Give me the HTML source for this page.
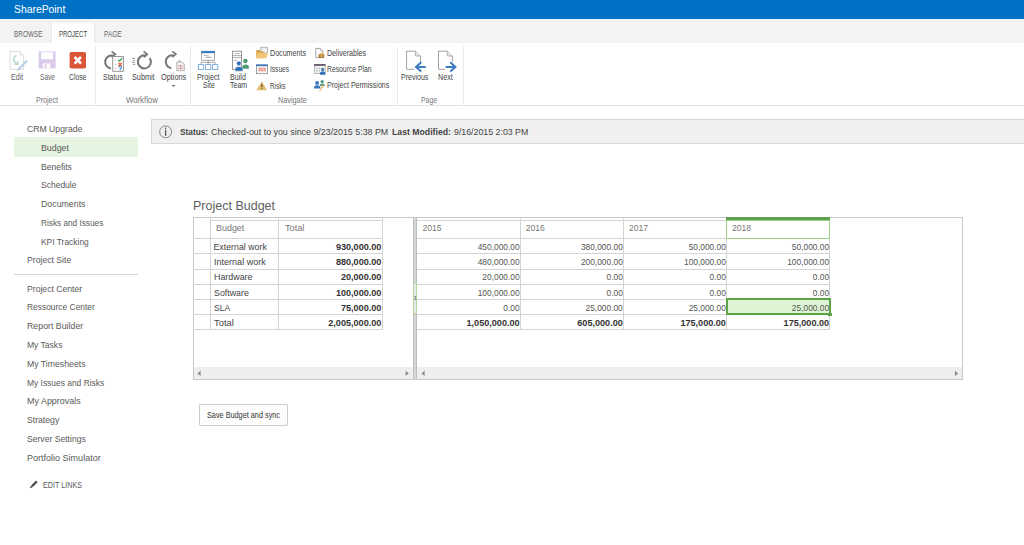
<!DOCTYPE html>
<html><head><meta charset="utf-8"><title>Project Budget</title>
<style>
html,body{margin:0;padding:0;}
body{width:1024px;height:545px;overflow:hidden;position:relative;background:#fff;font-family:"Liberation Sans",sans-serif;}
.t{position:absolute;white-space:pre;line-height:1;transform-origin:0 0;}
.a{position:absolute;}
</style></head><body>
<div class="a" style="left:0;top:0;width:1024px;height:19px;background:#0072c6"></div>
<div class="a" style="left:0;top:19px;width:1024px;height:24px;background:#f3f3f3"></div>
<div class="a" style="left:52px;top:23px;width:42px;height:20px;background:#fff;box-shadow:-1px 0 0 #e9e9e9,1px 0 0 #e9e9e9"></div>
<div class="a" style="left:0;top:105px;width:1024px;height:1px;background:#e3e3e3"></div>
<div class="a" style="left:95px;top:46px;width:1px;height:59px;background:#ebebeb"></div>
<div class="a" style="left:190px;top:46px;width:1px;height:59px;background:#ebebeb"></div>
<div class="a" style="left:397px;top:46px;width:1px;height:59px;background:#ebebeb"></div>
<div class="a" style="left:463px;top:46px;width:1px;height:59px;background:#ebebeb"></div>
<!-- nav -->
<div class="a" style="left:14px;top:137px;width:124px;height:20px;background:#e6f5e1"></div>
<div class="a" style="left:14px;top:274px;width:124px;height:1px;background:#d4d4d4"></div>
<!-- status -->
<div class="a" style="left:151px;top:119px;width:880px;height:23px;background:#f0f0f0;border:1px solid #d8d8d8"></div>
<!-- grid outer -->
<div class="a" style="left:193px;top:217px;width:768px;height:161px;border:1px solid #c8c8c8"></div>
<!-- left grid lines -->
<div class="a" style="left:210px;top:217px;width:1px;height:113px;background:#d4d4d4"></div>
<div class="a" style="left:278px;top:217px;width:1px;height:113px;background:#d4d4d4"></div>
<div class="a" style="left:382px;top:217px;width:1px;height:113px;background:#d4d4d4"></div>
<div class="a" style="left:210px;top:220px;width:173px;height:1px;background:#d4d4d4"></div>
<div class="a" style="left:193px;top:238px;width:190px;height:1px;background:#d4d4d4"></div><div class="a" style="left:193px;top:253px;width:190px;height:1px;background:#d4d4d4"></div><div class="a" style="left:193px;top:269px;width:190px;height:1px;background:#d4d4d4"></div><div class="a" style="left:193px;top:284px;width:190px;height:1px;background:#d4d4d4"></div><div class="a" style="left:193px;top:299px;width:190px;height:1px;background:#d4d4d4"></div><div class="a" style="left:193px;top:314px;width:190px;height:1px;background:#d4d4d4"></div><div class="a" style="left:193px;top:329px;width:190px;height:1px;background:#d4d4d4"></div>
<!-- right grid lines -->
<div class="a" style="left:520px;top:217px;width:1px;height:113px;background:#d4d4d4"></div>
<div class="a" style="left:623px;top:217px;width:1px;height:113px;background:#d4d4d4"></div>
<div class="a" style="left:726px;top:217px;width:1px;height:113px;background:#d4d4d4"></div>
<div class="a" style="left:829px;top:217px;width:1px;height:113px;background:#d4d4d4"></div>
<div class="a" style="left:417px;top:220px;width:413px;height:1px;background:#d4d4d4"></div>
<div class="a" style="left:417px;top:238px;width:413px;height:1px;background:#d4d4d4"></div><div class="a" style="left:417px;top:253px;width:413px;height:1px;background:#d4d4d4"></div><div class="a" style="left:417px;top:269px;width:413px;height:1px;background:#d4d4d4"></div><div class="a" style="left:417px;top:284px;width:413px;height:1px;background:#d4d4d4"></div><div class="a" style="left:417px;top:299px;width:413px;height:1px;background:#d4d4d4"></div><div class="a" style="left:417px;top:314px;width:413px;height:1px;background:#d4d4d4"></div><div class="a" style="left:417px;top:329px;width:413px;height:1px;background:#d4d4d4"></div>
<!-- 2018 header highlight -->
<div class="a" style="left:726px;top:217px;width:104px;height:3px;background:#5fa04e"></div>
<div class="a" style="left:726px;top:220px;width:102px;height:17px;border:1px solid #9ccf88"></div>
<!-- selected cell -->
<div class="a" style="left:726px;top:298px;width:101px;height:13px;border:2px solid #5ea34a;background:#ddf5d4"></div>
<div class="a" style="left:828px;top:313px;width:4px;height:3px;background:#5ea34a"></div>
<!-- scrollbars -->
<div class="a" style="left:194px;top:367px;width:219px;height:12px;background:#eeeeee"></div>
<div class="a" style="left:417px;top:367px;width:545px;height:12px;background:#eeeeee"></div>
<!-- splitter -->
<div class="a" style="left:413px;top:217px;width:4px;height:162px;background:#bdbdbd"></div>
<div class="a" style="left:414px;top:217px;width:2px;height:162px;background:#d6d6d6"></div>
<div class="a" style="left:413px;top:283px;width:2px;height:29px;border:1px solid #b0d9a0;background:#e9e9e9;border-radius:1px"></div>
<!-- button -->
<div class="a" style="left:199px;top:404px;width:87px;height:20px;border:1px solid #cdcdcd;background:#fdfdfd;border-radius:1px"></div>
<svg class="a" style="left:0;top:0" width="1024" height="545" viewBox="0 0 1024 545">
<!-- Edit (disabled) -->
<path d="M10 51.5 H19.9 L23.6 55.2 V69.4 H10 Z" fill="#fff" stroke="#d9d9d9" stroke-width="0.9"/>
<path d="M19.9 51.5 V55.2 H23.6" fill="#f2f2f2" stroke="#dadada" stroke-width="0.8"/>
<path d="M16.6 55.4 C12.6 56.4 12.4 62.2 17.2 63.8" fill="none" stroke="#b9dac5" stroke-width="1.5"/>
<path d="M17.9 60.9 V64.4 H14.6" fill="none" stroke="#b9dac5" stroke-width="1.2"/>
<path d="M26.22 60.02 L27.78 61.58 L19.78 69.58 L16.5 71.3 L18.22 68.02 Z" fill="#b3cfec"/>
<!-- Save (disabled) -->
<path d="M38.6 51.4 H55.6 V68.4 H38.6 Z" fill="#dacbeb"/>
<rect x="41.2" y="52.3" width="11.9" height="7" fill="#fff"/>
<rect x="42.8" y="63.4" width="7.4" height="5" fill="#fff"/>
<rect x="44.5" y="64.3" width="2" height="4.1" fill="#dacbeb"/>
<!-- Close -->
<rect x="69.6" y="52" width="16.4" height="16.6" rx="1.8" fill="#db5537"/>
<path d="M74.6 57 L81 63.6 M81 57 L74.6 63.6" stroke="#fff" stroke-width="2.6"/>
<!-- Status -->
<path d="M112.95 55.54 A6.5 6.5 0 1 0 111.03 68.38" fill="none" stroke="#767676" stroke-width="2"/>
<path d="M111.6 51.4 L115.3 54.2 L111.6 57.2" fill="none" stroke="#767676" stroke-width="1.7"/>
<rect x="112.7" y="56.6" width="10.7" height="14.7" fill="#fff" stroke="#8a8a8a" stroke-width="0.9"/>
<path d="M114.4 60.3 H116.4 M114.4 64.4 H116.4 M114.4 68.5 H116.4" stroke="#b5b5b5" stroke-width="0.8"/>
<path d="M118 59.6 L119.6 61.1 L122.2 58" fill="none" stroke="#3f9e5a" stroke-width="1.2"/>
<path d="M118.4 62.8 L121.8 66.2 M121.8 62.8 L118.4 66.2" stroke="#e06a3c" stroke-width="1.3"/>
<path d="M118.9 67.6 A1.3 1.3 0 1 1 120.2 68.9 V70.6" fill="none" stroke="#4a8fd4" stroke-width="1.1"/>
<!-- Submit -->
<path d="M146.41 55.72 A6.5 6.5 0 1 0 149.72 58.17" fill="none" stroke="#767676" stroke-width="2"/>
<path d="M143.6 51.4 L147.2 54.2 L143.6 57.3" fill="none" stroke="#767676" stroke-width="1.7"/>
<path d="M132.1 58.3 H135.1 M132.8 60.3 H135.1 M132.1 62.4 H135.1 M132.8 64.4 H135.1" stroke="#8a8a8a" stroke-width="0.9"/>
<!-- Options -->
<path d="M173.55 55.44 A6.5 6.5 0 1 0 171.30 68.24" fill="none" stroke="#767676" stroke-width="2"/>
<path d="M172.3 51.4 L175.9 54.1 L172.3 57.1" fill="none" stroke="#767676" stroke-width="1.7"/>
<path d="M176.8 62 H182.3 L184.3 64 V70.7 H176.8 Z" fill="#f4f4f4" stroke="#a0a0a0" stroke-width="0.8"/>
<path d="M179 61.6 L179.7 59.4 L180.4 61.6 Z" fill="#777"/>
<path d="M177.9 65.9 H180 M181 65.9 H183.2 M177.9 68.4 H180 M181 68.4 H183.2 M180.5 64.8 V69.8" stroke="#c87a7a" stroke-width="0.7"/>
<path d="M171.7 85 H175.3 L173.5 87 Z" fill="#666"/>
<!-- Project Site -->
<rect x="201.6" y="51.3" width="13" height="9" fill="#fff" stroke="#999" stroke-width="0.8"/>
<rect x="201.3" y="51" width="13.6" height="2.2" fill="#3d7cc4"/>
<path d="M203.6 55.2 L209.4 56.2 M205.4 57.4 H212" stroke="#9a9a9a" stroke-width="0.7"/>
<path d="M208.2 60.4 V62.4 M201 62.4 H215 M201 62.4 V64.5 M208.2 62.4 V64.5 M215 62.4 V64.5" stroke="#8c8c8c" stroke-width="0.7" fill="none"/>
<rect x="198.5" y="64.6" width="5.2" height="5" fill="#fff" stroke="#6a9fd8" stroke-width="0.8"/>
<rect x="205.6" y="64.6" width="5.2" height="5" fill="#fff" stroke="#6a9fd8" stroke-width="0.8"/>
<rect x="212.6" y="64.6" width="5.2" height="5" fill="#fff" stroke="#6a9fd8" stroke-width="0.8"/>
<!-- Build Team -->
<rect x="232.6" y="51.2" width="9" height="18.4" fill="#fff" stroke="#7e7e7e" stroke-width="0.8"/>
<path d="M234.5 53.6 H239.5 M232.6 55.6 H241.6 M232.6 57.6 H241.6 M233.5 60.3 H237" stroke="#8e8e8e" stroke-width="0.7"/>
<circle cx="245.4" cy="61" r="2.2" fill="#4e9a72"/>
<path d="M242.2 68.8 V66.6 Q242.4 64.6 245.4 64.4 Q248.6 64.6 248.8 66.6 V68.8 Z" fill="#4e9a72"/>
<circle cx="238.8" cy="63.4" r="2.3" fill="#2f6fb4" stroke="#fff" stroke-width="0.5"/>
<path d="M235 71.2 V68.8 Q235.3 66.6 238.9 66.5 Q242.6 66.6 242.9 68.8 V71.2 Z" fill="#2f6fb4" stroke="#fff" stroke-width="0.5"/>
<!-- Documents -->
<path d="M260.7 47.3 H267.6 V53 H260.7 Z" fill="#eee" stroke="#9a9a9a" stroke-width="0.7"/>
<path d="M256.2 50 H259.6 L260.6 51.2 H263.4 V58.2 H256.2 Z" fill="#d9a54f"/>
<path d="M256.2 58.2 L257.4 52.9 H267.8 L266.6 58.2 Z" fill="#f0c577"/>
<!-- Issues -->
<rect x="256.4" y="64.9" width="11" height="8.8" fill="#f7f7f7" stroke="#8c8c8c" stroke-width="0.8"/>
<rect x="256" y="64.5" width="11.8" height="1.7" fill="#3d7cc4"/>
<rect x="258.6" y="67.8" width="7.2" height="3.4" fill="#ee8f7c"/>
<path d="M258.6 69.5 H265.8 M261 67.8 V71.2 M263.4 67.8 V71.2" stroke="#fbe0da" stroke-width="0.5"/>
<!-- Risks -->
<path d="M261.8 81.2 L267.2 90.3 H256.4 Z" fill="#e8bd6c"/>
<path d="M261.8 84.2 V87.3 M261.8 88.2 V89.2" stroke="#444" stroke-width="1.1"/>
<!-- Deliverables -->
<path d="M315.8 48.4 H320.4 L322.8 50.8 V57.6 H315.8 Z" fill="#fff" stroke="#8c8c8c" stroke-width="0.8"/>
<path d="M320.4 48.4 V50.8 H322.8" fill="#eee" stroke="#a0a0a0" stroke-width="0.6"/>
<rect x="318.6" y="54.8" width="5.6" height="3" fill="#a5722f"/>
<path d="M317.8 54.4 L321.6 52.8 L325.2 54.4 L321.6 55.6 Z" fill="#d9a956"/>
<rect x="320.4" y="55.6" width="2.4" height="1.1" fill="#e6c78a"/>
<!-- Resource Plan -->
<rect x="314.3" y="64.4" width="10.8" height="9.2" fill="#fff" stroke="#8a8a8a" stroke-width="0.6"/>
<rect x="314.2" y="64.2" width="11.2" height="1.6" fill="#5a4a60"/>
<path d="M317 65.8 V73.6 M319.7 65.8 V73.6 M322.4 65.8 V70 M314.3 68.3 H325 M314.3 70.8 H320" stroke="#aaa" stroke-width="0.5"/>
<circle cx="322.7" cy="69.6" r="1.5" fill="#2f6fb4"/>
<path d="M320 74.7 V72.8 Q320.3 71.3 322.7 71.3 Q325.1 71.3 325.4 72.8 V74.7 Z" fill="#2f6fb4"/>
<!-- Project Permissions -->
<circle cx="322.2" cy="81.6" r="1.7" fill="#4d9a80"/>
<path d="M319.9 86 V84.8 Q320.2 83.5 322.2 83.4 Q324.4 83.5 324.7 84.8 V86 Z" fill="#4d9a80"/>
<circle cx="317.1" cy="83" r="1.9" fill="#3a76bd"/>
<path d="M314 88.5 V86.9 Q314.3 85.4 317.1 85.3 Q320 85.4 320.3 86.9 V88.5 Z" fill="#3a76bd"/>
<circle cx="322.6" cy="86.6" r="1.4" fill="#eec07a"/>
<path d="M321.9 87.6 L319.6 90.9 M320.4 89.6 L321.3 90.3" stroke="#eec07a" stroke-width="1.1"/>
<!-- Previous -->
<path d="M406.6 51.2 H415.4 L420.5 56 V69.3 H406.6 Z" fill="#fff" stroke="#8c8c8c" stroke-width="0.8"/>
<path d="M415.4 51.2 V56 H420.5" fill="#e8e8e8" stroke="#9c9c9c" stroke-width="0.7"/>
<rect x="414" y="62" width="8" height="10" fill="#fff"/>
<path d="M425.7 66.9 H416 M421.3 62.3 L416 66.9 L421.3 71.4" fill="none" stroke="#3a7cc0" stroke-width="2"/>
<!-- Next -->
<path d="M438.5 51.2 H447.3 L452.4 56 V69.3 H438.5 Z" fill="#fff" stroke="#8c8c8c" stroke-width="0.8"/>
<path d="M447.3 51.2 V56 H452.4" fill="#e8e8e8" stroke="#9c9c9c" stroke-width="0.7"/>
<rect x="445" y="62" width="9" height="10" fill="#fff"/>
<path d="M445.7 66.9 H455.2 M450.2 62.3 L455.4 66.9 L450.2 71.4" fill="none" stroke="#3a7cc0" stroke-width="2"/>
<!-- info icon -->
<circle cx="165.6" cy="131.85" r="5.95" fill="none" stroke="#7a7a7a" stroke-width="0.9"/>
<path d="M165.6 129.7 V135.8" stroke="#555" stroke-width="1.3"/>
<circle cx="165.6" cy="128.3" r="0.8" fill="#555"/>
<!-- edit links pencil -->
<path d="M31.2 485.4 L36 480.6 L37.6 482.2 L32.8 487 Z" fill="#4a4a4a"/>
<path d="M31 485.6 L32.6 487.2 L29.6 488.3 Z" fill="#4a4a4a"/>
<!-- scroll arrows -->
<path d="M200.6 370.8 V376 L197.4 373.4 Z" fill="#8a8a8a"/>
<path d="M405.6 370.8 V376 L408.8 373.4 Z" fill="#8a8a8a"/>
<path d="M424.6 370.8 V376 L421.4 373.4 Z" fill="#8a8a8a"/>
<path d="M954.9 370.8 V376 L958.2 373.4 Z" fill="#8a8a8a"/>
<!-- splitter grip -->
<path d="M414.6 296.6 H416.2 M414.6 298.1 H416.2 M414.6 299.6 H416.2" stroke="#444" stroke-width="0.7"/>

</svg>

<div class="t" style="left:13.75px;top:4.00px;font-size:10.6px;color:#fff;transform:scaleX(0.978)">SharePoint</div>
<div class="t" style="left:13.75px;top:30.00px;font-size:8.4px;color:#666;transform:scaleX(0.765)">BROWSE</div>
<div class="t" style="left:58.75px;top:30.00px;font-size:8.4px;color:#444;transform:scaleX(0.719)">PROJECT</div>
<div class="t" style="left:103.75px;top:30.00px;font-size:8.4px;color:#666;transform:scaleX(0.783)">PAGE</div>
<div class="t" style="left:11.30px;top:73.00px;font-size:8.8px;color:#666;transform:scaleX(0.804)">Edit</div>
<div class="t" style="left:40.00px;top:73.00px;font-size:8.8px;color:#666;transform:scaleX(0.748)">Save</div>
<div class="t" style="left:69.00px;top:73.00px;font-size:8.8px;color:#444;transform:scaleX(0.769)">Close</div>
<div class="t" style="left:103.00px;top:73.00px;font-size:8.8px;color:#444;transform:scaleX(0.789)">Status</div>
<div class="t" style="left:131.80px;top:73.00px;font-size:8.8px;color:#444;transform:scaleX(0.825)">Submit</div>
<div class="t" style="left:160.80px;top:73.00px;font-size:8.8px;color:#444;transform:scaleX(0.831)">Options</div>
<div class="t" style="left:197.30px;top:73.00px;font-size:8.8px;color:#444;transform:scaleX(0.825)">Project</div>
<div class="t" style="left:202.70px;top:81.00px;font-size:8.8px;color:#444;transform:scaleX(0.771)">Site</div>
<div class="t" style="left:230.40px;top:73.00px;font-size:8.8px;color:#444;transform:scaleX(0.813)">Build</div>
<div class="t" style="left:230.20px;top:81.00px;font-size:8.8px;color:#444;transform:scaleX(0.799)">Team</div>
<div class="t" style="left:270.00px;top:49.00px;font-size:8.8px;color:#444;transform:scaleX(0.809)">Documents</div>
<div class="t" style="left:270.00px;top:65.00px;font-size:8.8px;color:#444;transform:scaleX(0.747)">Issues</div>
<div class="t" style="left:270.00px;top:82.00px;font-size:8.8px;color:#444;transform:scaleX(0.720)">Risks</div>
<div class="t" style="left:327.20px;top:49.00px;font-size:8.8px;color:#444;transform:scaleX(0.806)">Deliverables</div>
<div class="t" style="left:327.20px;top:65.00px;font-size:8.8px;color:#444;transform:scaleX(0.773)">Resource Plan</div>
<div class="t" style="left:327.20px;top:81.00px;font-size:8.8px;color:#444;transform:scaleX(0.801)">Project Permissions</div>
<div class="t" style="left:401.30px;top:73.00px;font-size:8.8px;color:#444;transform:scaleX(0.800)">Previous</div>
<div class="t" style="left:438.30px;top:73.00px;font-size:8.8px;color:#444;transform:scaleX(0.812)">Next</div>
<div class="t" style="left:35.70px;top:96.00px;font-size:8.6px;color:#777;transform:scaleX(0.826)">Project</div>
<div class="t" style="left:126.00px;top:96.00px;font-size:8.6px;color:#777;transform:scaleX(0.904)">Workflow</div>
<div class="t" style="left:278.30px;top:96.00px;font-size:8.6px;color:#777;transform:scaleX(0.846)">Navigate</div>
<div class="t" style="left:421.00px;top:96.00px;font-size:8.6px;color:#777;transform:scaleX(0.797)">Page</div>
<div class="t" style="left:27.10px;top:125.00px;font-size:9.3px;color:#5a5a5a;transform:scaleX(0.931)">CRM Upgrade</div>
<div class="t" style="left:41.10px;top:144.00px;font-size:9.3px;color:#5a5a5a;transform:scaleX(0.947)">Budget</div>
<div class="t" style="left:41.10px;top:163.00px;font-size:9.3px;color:#5a5a5a;transform:scaleX(0.917)">Benefits</div>
<div class="t" style="left:41.10px;top:181.00px;font-size:9.3px;color:#5a5a5a;transform:scaleX(0.915)">Schedule</div>
<div class="t" style="left:41.10px;top:200.00px;font-size:9.3px;color:#5a5a5a;transform:scaleX(0.946)">Documents</div>
<div class="t" style="left:41.10px;top:219.00px;font-size:9.3px;color:#5a5a5a;transform:scaleX(0.886)">Risks and Issues</div>
<div class="t" style="left:41.10px;top:238.00px;font-size:9.3px;color:#5a5a5a;transform:scaleX(0.907)">KPI Tracking</div>
<div class="t" style="left:27.20px;top:256.00px;font-size:9.3px;color:#5a5a5a;transform:scaleX(0.930)">Project Site</div>
<div class="t" style="left:27.20px;top:285.00px;font-size:9.3px;color:#5a5a5a;transform:scaleX(0.929)">Project Center</div>
<div class="t" style="left:27.20px;top:303.00px;font-size:9.3px;color:#5a5a5a;transform:scaleX(0.905)">Ressource Center</div>
<div class="t" style="left:27.20px;top:322.00px;font-size:9.3px;color:#5a5a5a;transform:scaleX(0.946)">Report Builder</div>
<div class="t" style="left:27.20px;top:341.00px;font-size:9.3px;color:#5a5a5a;transform:scaleX(0.918)">My Tasks</div>
<div class="t" style="left:27.20px;top:360.00px;font-size:9.3px;color:#5a5a5a;transform:scaleX(0.936)">My Timesheets</div>
<div class="t" style="left:27.20px;top:379.00px;font-size:9.3px;color:#5a5a5a;transform:scaleX(0.906)">My Issues and Risks</div>
<div class="t" style="left:27.20px;top:397.00px;font-size:9.3px;color:#5a5a5a;transform:scaleX(0.962)">My Approvals</div>
<div class="t" style="left:27.20px;top:416.00px;font-size:9.3px;color:#5a5a5a;transform:scaleX(0.930)">Strategy</div>
<div class="t" style="left:27.20px;top:435.00px;font-size:9.3px;color:#5a5a5a;transform:scaleX(0.924)">Server Settings</div>
<div class="t" style="left:27.20px;top:454.00px;font-size:9.3px;color:#5a5a5a;transform:scaleX(0.970)">Portfolio Simulator</div>
<div class="t" style="left:43.00px;top:482.00px;font-size:8.2px;color:#5a5a5a;transform:scaleX(0.877)">EDIT LINKS</div>
<div class="t" style="left:179.50px;top:128.00px;font-size:9px;color:#444;font-weight:700;transform:scaleX(0.921)">Status:</div>
<div class="t" style="left:210.70px;top:128.00px;font-size:9px;color:#444;transform:scaleX(0.984)">Checked-out to you since 9/23/2015 5:38 PM</div>
<div class="t" style="left:391.70px;top:128.00px;font-size:9px;color:#444;font-weight:700;transform:scaleX(0.966)">Last Modified:</div>
<div class="t" style="left:454.00px;top:128.00px;font-size:9px;color:#444;transform:scaleX(0.977)">9/16/2015 2:03 PM</div>
<div class="t" style="left:193.00px;top:200.00px;font-size:12.8px;color:#5e5e5e;transform:scaleX(0.977)">Project Budget</div>
<div class="t" style="left:215.60px;top:224.00px;font-size:8.6px;color:#777;transform:scaleX(1.039)">Budget</div>
<div class="t" style="left:284.60px;top:224.00px;font-size:8.6px;color:#777;transform:scaleX(1.069)">Total</div>
<div class="t" style="left:422.50px;top:224.00px;font-size:8.6px;color:#777">2015</div>
<div class="t" style="left:525.70px;top:224.00px;font-size:8.6px;color:#777">2016</div>
<div class="t" style="left:629.00px;top:224.00px;font-size:8.6px;color:#777">2017</div>
<div class="t" style="left:732.00px;top:224.00px;font-size:8.6px;color:#777">2018</div>
<div class="t" style="left:213.50px;top:243.00px;font-size:8.8px;color:#444">External work</div>
<div class="t" style="left:335.88px;top:243.00px;font-size:9.1px;color:#333;font-weight:700">930,000.00</div>
<div class="t" style="left:477.68px;top:243.00px;font-size:8.4px;color:#555">450,000.00</div>
<div class="t" style="left:580.88px;top:243.00px;font-size:8.4px;color:#555">380,000.00</div>
<div class="t" style="left:688.63px;top:243.00px;font-size:8.4px;color:#555">50,000.00</div>
<div class="t" style="left:791.83px;top:243.00px;font-size:8.4px;color:#555">50,000.00</div>
<div class="t" style="left:213.50px;top:258.00px;font-size:8.8px;color:#444;transform:scaleX(1.027)">Internal work</div>
<div class="t" style="left:335.88px;top:258.00px;font-size:9.1px;color:#333;font-weight:700">880,000.00</div>
<div class="t" style="left:477.68px;top:258.00px;font-size:8.4px;color:#555">480,000.00</div>
<div class="t" style="left:580.88px;top:258.00px;font-size:8.4px;color:#555">200,000.00</div>
<div class="t" style="left:683.98px;top:258.00px;font-size:8.4px;color:#555">100,000.00</div>
<div class="t" style="left:787.18px;top:258.00px;font-size:8.4px;color:#555">100,000.00</div>
<div class="t" style="left:213.50px;top:273.00px;font-size:8.8px;color:#444;transform:scaleX(1.009)">Hardware</div>
<div class="t" style="left:340.93px;top:273.00px;font-size:9.1px;color:#333;font-weight:700">20,000.00</div>
<div class="t" style="left:482.33px;top:273.00px;font-size:8.4px;color:#555">20,000.00</div>
<div class="t" style="left:606.49px;top:273.00px;font-size:8.4px;color:#555">0.00</div>
<div class="t" style="left:709.59px;top:273.00px;font-size:8.4px;color:#555">0.00</div>
<div class="t" style="left:812.79px;top:273.00px;font-size:8.4px;color:#555">0.00</div>
<div class="t" style="left:213.50px;top:289.00px;font-size:8.8px;color:#444;transform:scaleX(1.005)">Software</div>
<div class="t" style="left:335.88px;top:289.00px;font-size:9.1px;color:#333;font-weight:700">100,000.00</div>
<div class="t" style="left:477.68px;top:289.00px;font-size:8.4px;color:#555">100,000.00</div>
<div class="t" style="left:606.49px;top:289.00px;font-size:8.4px;color:#555">0.00</div>
<div class="t" style="left:709.59px;top:289.00px;font-size:8.4px;color:#555">0.00</div>
<div class="t" style="left:812.79px;top:289.00px;font-size:8.4px;color:#555">0.00</div>
<div class="t" style="left:213.50px;top:304.00px;font-size:8.8px;color:#444;transform:scaleX(0.968)">SLA</div>
<div class="t" style="left:340.93px;top:304.00px;font-size:9.1px;color:#333;font-weight:700">75,000.00</div>
<div class="t" style="left:503.29px;top:304.00px;font-size:8.4px;color:#555">0.00</div>
<div class="t" style="left:585.53px;top:304.00px;font-size:8.4px;color:#555">25,000.00</div>
<div class="t" style="left:688.63px;top:304.00px;font-size:8.4px;color:#555">25,000.00</div>
<div class="t" style="left:791.83px;top:304.00px;font-size:8.4px;color:#555">25,000.00</div>
<div class="t" style="left:213.50px;top:319.00px;font-size:8.8px;color:#444;transform:scaleX(1.065)">Total</div>
<div class="t" style="left:328.29px;top:319.00px;font-size:9.1px;color:#333;font-weight:700">2,005,000.00</div>
<div class="t" style="left:466.49px;top:319.00px;font-size:9.1px;color:#333;font-weight:700">1,050,000.00</div>
<div class="t" style="left:577.28px;top:319.00px;font-size:9.1px;color:#333;font-weight:700">605,000.00</div>
<div class="t" style="left:680.38px;top:319.00px;font-size:9.1px;color:#333;font-weight:700">175,000.00</div>
<div class="t" style="left:783.58px;top:319.00px;font-size:9.1px;color:#333;font-weight:700">175,000.00</div>
<div class="t" style="left:207.00px;top:411.00px;font-size:8.8px;color:#333;transform:scaleX(0.829)">Save Budget and sync</div>
</body></html>
